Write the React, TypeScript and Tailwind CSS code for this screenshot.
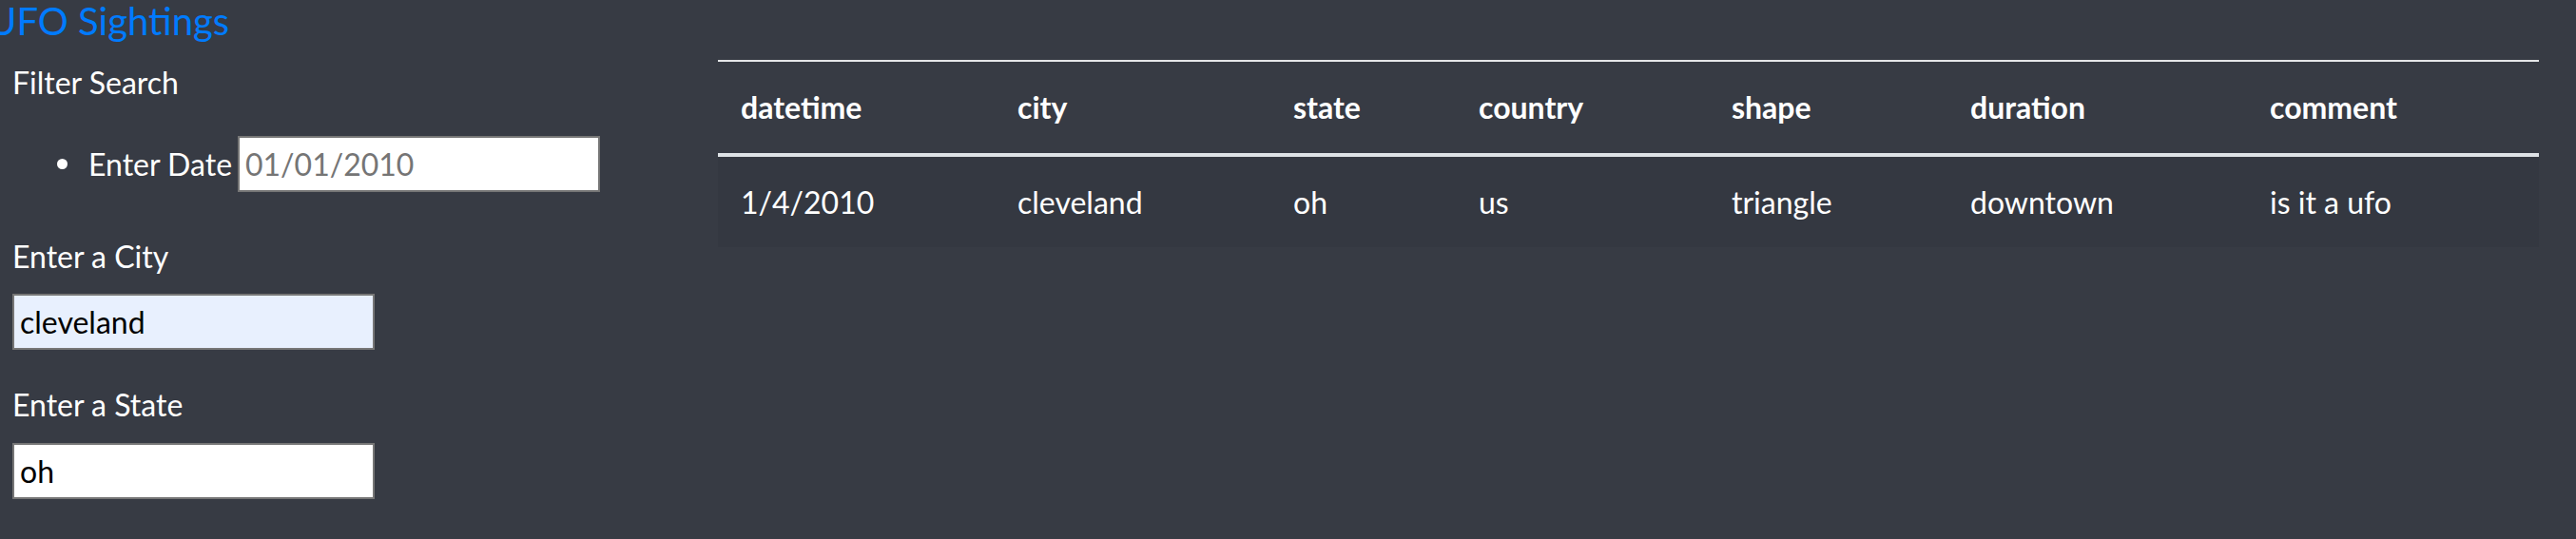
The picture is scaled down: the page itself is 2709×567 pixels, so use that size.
import { useState } from 'react'

const font = { fontFamily: 'Lato, "Open Sans", sans-serif' }

const rows = [
  { datetime: '1/4/2010', city: 'cleveland', state: 'oh', country: 'us', shape: 'triangle', duration: 'downtown', comment: 'is it a ufo' },
]

const cols: { key: keyof (typeof rows)[number]; w: string }[] = [
  { key: 'datetime', w: 'w-[291px]' },
  { key: 'city', w: 'w-[290px]' },
  { key: 'state', w: 'w-[195px]' },
  { key: 'country', w: 'w-[266px]' },
  { key: 'shape', w: 'w-[251px]' },
  { key: 'duration', w: 'w-[315px]' },
  { key: 'comment', w: 'w-[307px]' },
]

const inputCls = 'block h-[59px] w-[381px] border-2 border-[#767676] px-[6px] text-[32px] text-black outline-none placeholder:text-[#757575]'

export default function App() {
  const [date, setDate] = useState('')
  const [city, setCity] = useState('cleveland')
  const [state, setState] = useState('oh')

  return (
    <div className="min-h-screen bg-[#373b44] text-white" style={font}>
      <div className="flex">
        {/* sidebar filters */}
        <div className="w-[755px] shrink-0 pl-[13px]">
          <h1 className="-ml-[25px] text-[40px] leading-[45px] text-[#007bff]">UFO Sightings</h1>
          <p className="mt-[18px] text-[32px] leading-[48px]">Filter Search</p>

          <ul className="mt-[32px]">
            <li className="flex items-center pl-[47px] text-[32px] leading-[48px]">
              <span className="h-[11px] w-[11px] shrink-0 rounded-full bg-white" />
              <span className="ml-[22px] w-[157px] shrink-0">Enter Date</span>
              <input
                value={date}
                onChange={e => setDate(e.target.value)}
                placeholder="01/01/2010"
                className={`${inputCls} bg-white`}
              />
            </li>
          </ul>

          <label className="mt-[44px] block text-[32px] leading-[48px]">Enter a City</label>
          <input
            value={city}
            onChange={e => setCity(e.target.value)}
            className={`${inputCls} mt-[15px] bg-[#e8f0fe]`}
          />

          <label className="mt-[34px] block text-[32px] leading-[48px]">Enter a State</label>
          <input
            value={state}
            onChange={e => setState(e.target.value)}
            className={`${inputCls} mt-[16px] bg-white`}
          />
        </div>

        {/* results */}
        <div className="pt-[63px]">
          <table className="w-[1915px] table-fixed border-collapse text-left text-[32px] leading-[48px]">
            <thead>
              <tr>
                {cols.map(c => (
                  <th key={c.key} className={`${c.w} border-t-2 border-b-4 border-t-[#e4e6e8] border-b-[#dee2e6] px-[24px] py-[24px] font-bold`}>
                    {c.key}
                  </th>
                ))}
              </tr>
            </thead>
            <tbody>
              {rows.map((r, i) => (
                <tr key={i} className="bg-[#343841]">
                  {cols.map(c => (
                    <td key={c.key} className="px-[24px] pt-[24px] pb-[23px] font-normal">{r[c.key]}</td>
                  ))}
                </tr>
              ))}
            </tbody>
          </table>
        </div>
      </div>
    </div>
  )
}
